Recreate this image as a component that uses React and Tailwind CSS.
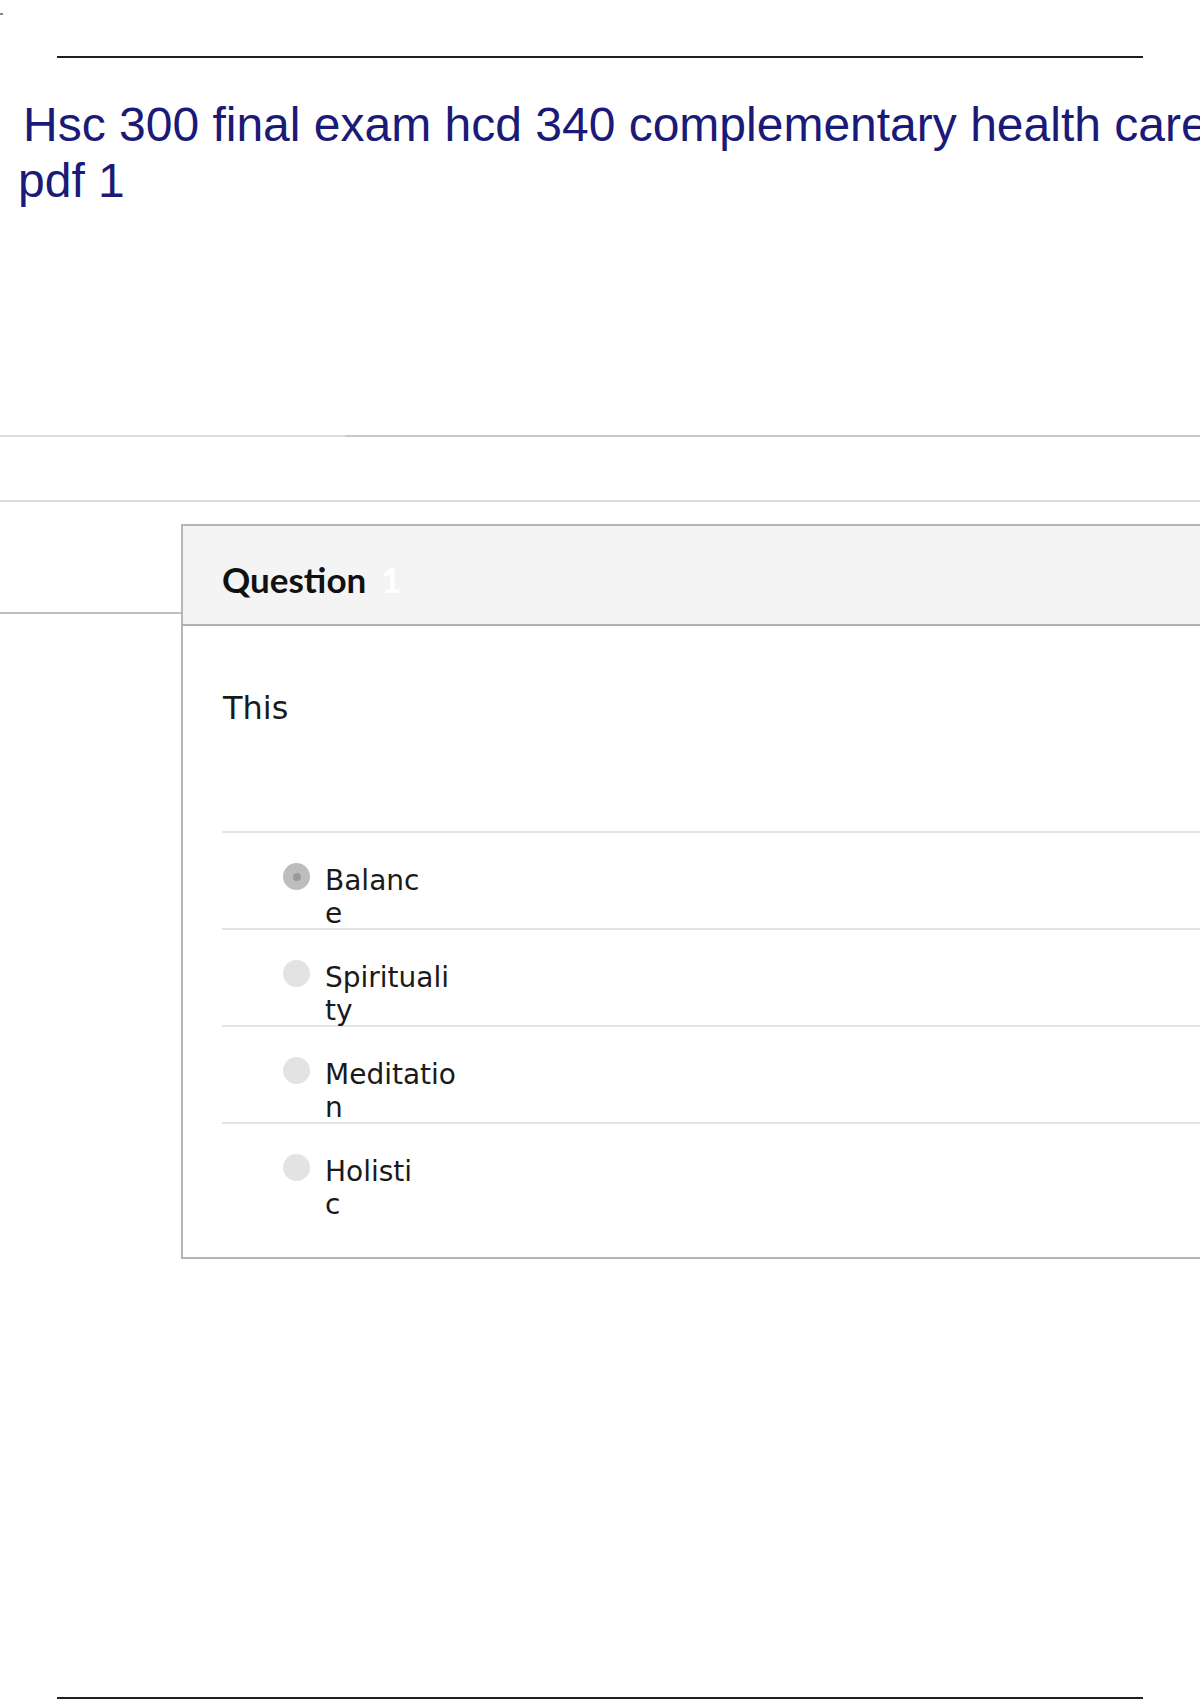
import React from "react";

const options = [
  { id: 1, head: "Balanc", tail: "e", checked: true },
  { id: 2, head: "Spirituali", tail: "ty" },
  { id: 3, head: "Meditatio", tail: "n" },
  { id: 4, head: "Holisti", tail: "c" },
];

const Radio = ({ checked }) =>
  checked ? (
    <span className="flex h-[27px] w-[27px] shrink-0 items-center justify-center rounded-full bg-[#bdbdbd]">
      <span className="h-[8px] w-[8px] rounded-full bg-[#9a9a9a]" />
    </span>
  ) : (
    <span className="h-[27px] w-[27px] shrink-0 rounded-full bg-[#e3e3e3]" />
  );

const App = () => {
  return (
    <div className="relative h-[1700px] w-[1200px] overflow-hidden bg-white">
      {/* stray mark in the corner */}
      <span className="absolute left-0 top-[13px] h-[2px] w-[3px] bg-[#888]" />

      <div className="pt-[56px]">
        <div className="mx-[57px] h-[2px] bg-[#1f1f1f]" />
      </div>

      {/* Document title */}
      <h1
        className="mt-[39px] pl-[18px] text-[48px] font-normal leading-[56px] text-[#1a1a78]"
        style={{ fontFamily: '"Liberation Sans", Arial, sans-serif' }}
      >
        <span className="block whitespace-nowrap pl-[5px]">
          Hsc 300 final exam hcd 340 complementary health care
        </span>
        <span className="block">pdf 1</span>
      </h1>

      {/* separators */}
      <div className="mt-[226px] flex h-[2px]">
        <div className="w-[345px] bg-[#dcdcdc]" />
        <div className="flex-1 bg-[#c9c9c9]" />
      </div>
      <div className="mt-[63px] h-[2px] bg-[#dedede]" />

      <div className="mt-[22px] flex">
        <div className="w-[181px] shrink-0 pt-[88px]">
          <div className="h-[2px] bg-[#bfbfbf]" />
        </div>

        {/* Question card */}
        <div className="flex-1 border-y-2 border-l-2 border-[#b5b5b5]">
          <div
            className="h-[100px] border-b-2 border-[#b0b0b0] bg-[#f4f4f4] pl-[39px] pt-[32px] text-[35px] font-bold leading-[42px] text-[#111]"
            style={{ fontFamily: "Lato, sans-serif" }}
          >
            Question <span className="ml-[6px] text-white">1</span>
          </div>

          <div
            className="pl-[40px] pt-[64px] text-[#1a1a1a]"
            style={{ fontFamily: '"DejaVu Sans", Verdana, sans-serif' }}
          >
            <p className="text-[32px] leading-[36px]">This</p>

            <ul className="-ml-[1px] mt-[105px]">
              {options.map((opt, i) => (
                <li
                  key={opt.id}
                  className={`flex items-start border-t-2 border-[#e4e4e4] pl-[61px] pt-[30px] ${
                    i === options.length - 1 ? "h-[135px]" : "h-[97px]"
                  }`}
                >
                  <Radio checked={opt.checked} />
                  <span className="ml-[15px] mt-[1px] text-[28px] leading-[33px]">
                    <span className="block">{opt.head}</span>
                    <span className="block">{opt.tail}</span>
                  </span>
                </li>
              ))}
            </ul>
          </div>
        </div>
      </div>

      <div className="mx-[57px] mt-[438px] h-[2px] bg-[#1f1f1f]" />
    </div>
  );
};

export default App;
